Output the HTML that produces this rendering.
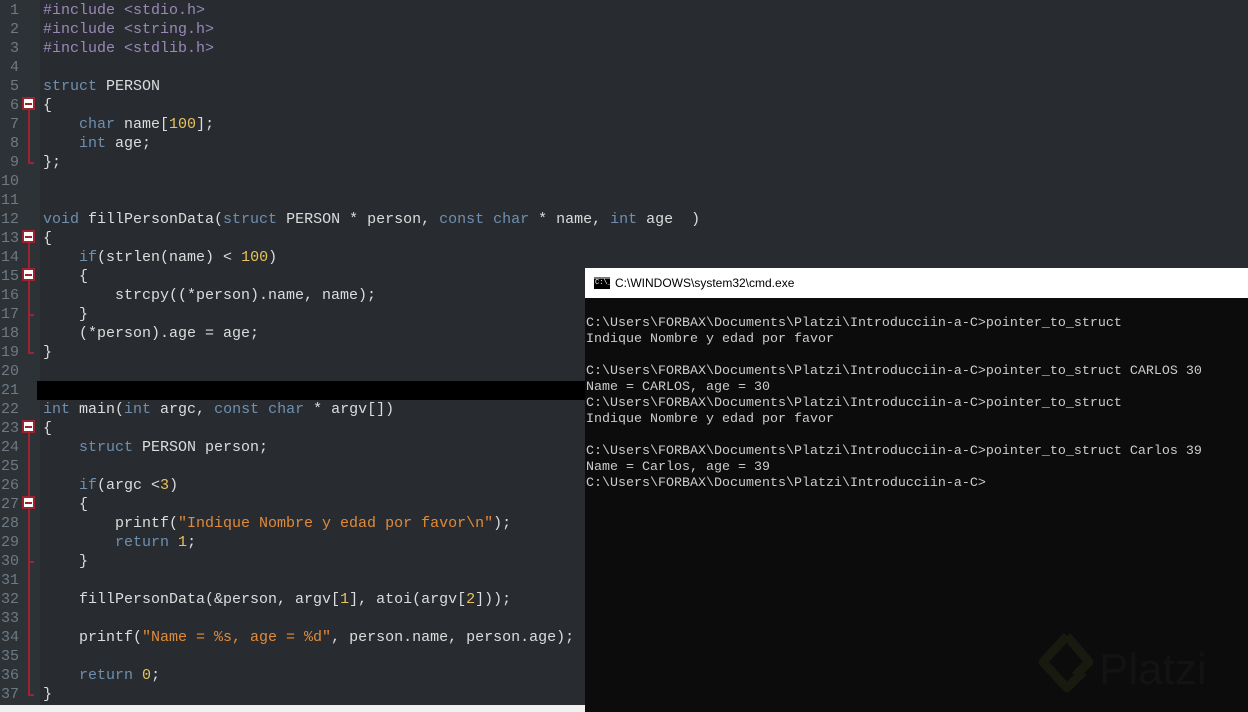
<!DOCTYPE html>
<html><head><meta charset="utf-8"><style>
*{margin:0;padding:0;box-sizing:border-box}
body{width:1248px;height:712px;overflow:hidden;background:#282c31;position:relative;font-family:"Liberation Mono",monospace}
#gut{position:absolute;left:0;top:0;width:40px;height:705px;background:#2d3237}
.ln{position:absolute;left:0;width:19px;text-align:right;color:#6e7a84;font-size:15px;line-height:19px;height:19px}
.c{position:absolute;left:43px;white-space:pre;color:#dcdcdc;font-size:15px;line-height:19px;height:19px}
.k{color:#6f8fb0}.p{color:#9a88b8}.n{color:#e8c35a}.s{color:#e08a3a}
.fb{position:absolute;left:22px;width:13px;height:13px;background:#fff;border:2px solid #9b2430}
.fb:after{content:"";position:absolute;left:1px;top:4px;width:7px;height:2px;background:#9b2430}
.vl{position:absolute;left:28px;width:2px;background:#9b2430}
.tk{position:absolute;left:28px;width:6px;height:2px;background:#9b2430}
#bar{position:absolute;left:37px;top:381px;width:548px;height:19px;background:#000}
#bot{position:absolute;left:0;top:705px;width:585px;height:7px;background:#f0f0f0}
#cmd{position:absolute;left:585px;top:268px;width:663px;height:444px;background:#0c0c0c}
#tt{height:30px;background:#fff;font-family:"Liberation Sans",sans-serif;font-size:12px;color:#000;line-height:30px;padding-left:30px;position:relative}
#ic{position:absolute;left:9px;top:9px;width:16px;height:12px;background:#000;border-top:2px solid #777;color:#fff;font-size:7px;line-height:9px;font-family:"Liberation Mono";padding-left:1px}
#con{position:absolute;left:1px;top:48px;white-space:pre;color:#cccccc;font-size:13.33px;line-height:16px}
</style></head><body>
<div id="gut"></div>
<div id="bar"></div>
<div id="bot"></div>
<div class="ln" style="top:1px">1</div><div class="c" style="top:1px"><span class="p">#include &lt;stdio.h&gt;</span></div>
<div class="ln" style="top:20px">2</div><div class="c" style="top:20px"><span class="p">#include &lt;string.h&gt;</span></div>
<div class="ln" style="top:39px">3</div><div class="c" style="top:39px"><span class="p">#include &lt;stdlib.h&gt;</span></div>
<div class="ln" style="top:58px">4</div>
<div class="ln" style="top:77px">5</div><div class="c" style="top:77px"><span class="k">struct</span> PERSON</div>
<div class="ln" style="top:96px">6</div><div class="c" style="top:96px">{</div>
<div class="ln" style="top:115px">7</div><div class="c" style="top:115px">    <span class="k">char</span> name[<span class="n">100</span>];</div>
<div class="ln" style="top:134px">8</div><div class="c" style="top:134px">    <span class="k">int</span> age;</div>
<div class="ln" style="top:153px">9</div><div class="c" style="top:153px">};</div>
<div class="ln" style="top:172px">10</div>
<div class="ln" style="top:191px">11</div>
<div class="ln" style="top:210px">12</div><div class="c" style="top:210px"><span class="k">void</span> fillPersonData(<span class="k">struct</span> PERSON * person, <span class="k">const char</span> * name, <span class="k">int</span> age  )</div>
<div class="ln" style="top:229px">13</div><div class="c" style="top:229px">{</div>
<div class="ln" style="top:248px">14</div><div class="c" style="top:248px">    <span class="k">if</span>(strlen(name) &lt; <span class="n">100</span>)</div>
<div class="ln" style="top:267px">15</div><div class="c" style="top:267px">    {</div>
<div class="ln" style="top:286px">16</div><div class="c" style="top:286px">        strcpy((*person).name, name);</div>
<div class="ln" style="top:305px">17</div><div class="c" style="top:305px">    }</div>
<div class="ln" style="top:324px">18</div><div class="c" style="top:324px">    (*person).age = age;</div>
<div class="ln" style="top:343px">19</div><div class="c" style="top:343px">}</div>
<div class="ln" style="top:362px">20</div>
<div class="ln" style="top:381px">21</div>
<div class="ln" style="top:400px">22</div><div class="c" style="top:400px"><span class="k">int</span> main(<span class="k">int</span> argc, <span class="k">const char</span> * argv[])</div>
<div class="ln" style="top:419px">23</div><div class="c" style="top:419px">{</div>
<div class="ln" style="top:438px">24</div><div class="c" style="top:438px">    <span class="k">struct</span> PERSON person;</div>
<div class="ln" style="top:457px">25</div>
<div class="ln" style="top:476px">26</div><div class="c" style="top:476px">    <span class="k">if</span>(argc &lt;<span class="n">3</span>)</div>
<div class="ln" style="top:495px">27</div><div class="c" style="top:495px">    {</div>
<div class="ln" style="top:514px">28</div><div class="c" style="top:514px">        printf(<span class="s">"Indique Nombre y edad por favor\n"</span>);</div>
<div class="ln" style="top:533px">29</div><div class="c" style="top:533px">        <span class="k">return</span> <span class="n">1</span>;</div>
<div class="ln" style="top:552px">30</div><div class="c" style="top:552px">    }</div>
<div class="ln" style="top:571px">31</div>
<div class="ln" style="top:590px">32</div><div class="c" style="top:590px">    fillPersonData(&amp;person, argv[<span class="n">1</span>], atoi(argv[<span class="n">2</span>]));</div>
<div class="ln" style="top:609px">33</div>
<div class="ln" style="top:628px">34</div><div class="c" style="top:628px">    printf(<span class="s">"Name = %s, age = %d"</span>, person.name, person.age);</div>
<div class="ln" style="top:647px">35</div>
<div class="ln" style="top:666px">36</div><div class="c" style="top:666px">    <span class="k">return</span> <span class="n">0</span>;</div>
<div class="ln" style="top:685px">37</div><div class="c" style="top:685px">}</div>

<div class="vl" style="top:108px;height:55px"></div><div class="tk" style="top:162px"></div>
<div class="vl" style="top:241px;height:112px"></div><div class="tk" style="top:352px"></div>
<div class="tk" style="top:314px"></div>
<div class="vl" style="top:431px;height:264px"></div><div class="tk" style="top:694px"></div>
<div class="tk" style="top:561px"></div>
<div class="fb" style="top:97px"></div>
<div class="fb" style="top:230px"></div>
<div class="fb" style="top:268px"></div>
<div class="fb" style="top:420px"></div>
<div class="fb" style="top:496px"></div>

<div id="cmd">
<div id="tt"><div id="ic">C:\_</div>C:\WINDOWS\system32\cmd.exe</div>
<div id="con">C:\Users\FORBAX\Documents\Platzi\Introducciin-a-C&gt;pointer_to_struct
Indique Nombre y edad por favor

C:\Users\FORBAX\Documents\Platzi\Introducciin-a-C&gt;pointer_to_struct CARLOS 30
Name = CARLOS, age = 30
C:\Users\FORBAX\Documents\Platzi\Introducciin-a-C&gt;pointer_to_struct
Indique Nombre y edad por favor

C:\Users\FORBAX\Documents\Platzi\Introducciin-a-C&gt;pointer_to_struct Carlos 39
Name = Carlos, age = 39
C:\Users\FORBAX\Documents\Platzi\Introducciin-a-C&gt;</div>
<svg style="position:absolute;left:440px;top:360px" width="200" height="80">
<path d="M42 8 L18 34 L42 60 L58 44" fill="none" stroke="#18190f" stroke-width="9" stroke-linejoin="round"/>
<path d="M42 8 L64 34 L50 48" fill="none" stroke="#18190f" stroke-width="9" stroke-linejoin="round"/>
<text x="74" y="56" font-family="Liberation Sans" font-size="44" fill="#131313">Platzi</text>
</svg>
</div>
</body></html>
